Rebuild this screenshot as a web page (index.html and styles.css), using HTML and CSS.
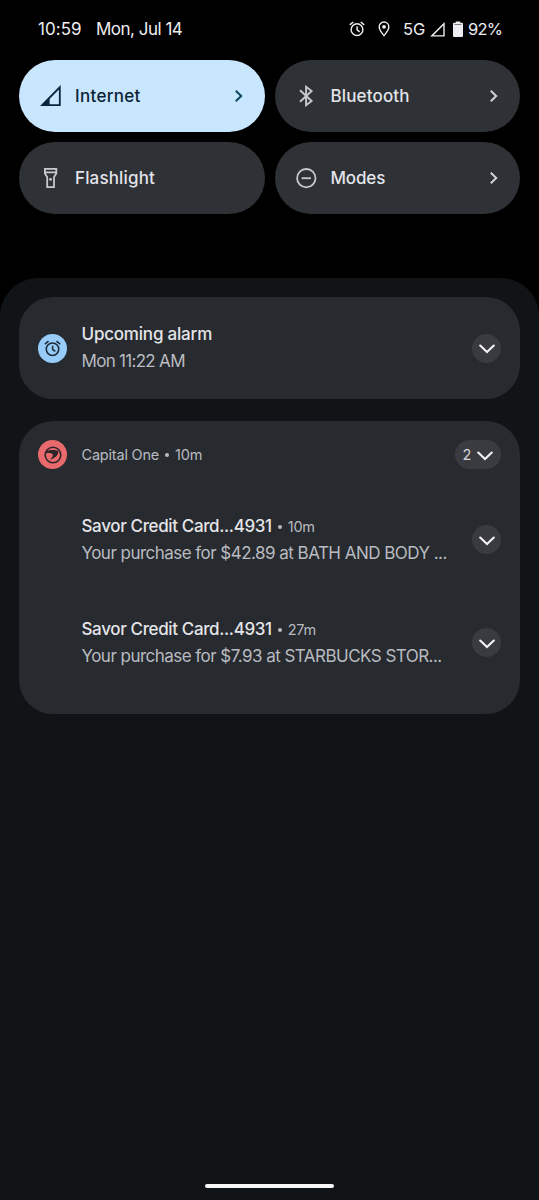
FILE: index.html
```html
<!DOCTYPE html>
<html lang="en">
<head>
<meta charset="utf-8">
<title>Notification shade</title>
<link rel="stylesheet" href="styles.css">
</head>
<body>
<svg width="0" height="0" class="defs">
  <symbol id="alarm" viewBox="0 0 24 24"><g fill="none" stroke="currentColor" stroke-width="2.2"><circle cx="12" cy="13" r="8.8"/><path d="M12.2 8V13.4L16 16.2M1.2 5.8L6.4 1.5M22.8 5.8L17.6 1.5"/></g></symbol>
  <symbol id="right" viewBox="0 0 10 14"><path d="M1.8 1.8L7.2 7L1.8 12.2" fill="none" stroke="currentColor" stroke-width="2"/></symbol>
  <symbol id="down" viewBox="0 0 16 10"><path d="M1.2 1.5L8 8.1L14.8 1.5" fill="none" stroke="currentColor" stroke-width="2.1" stroke-linecap="round"/></symbol>
</svg>
<div class="screen">
  <header class="status">
    <span class="clock">10:59</span><span class="date">Mon, Jul 14</span>
    <svg class="st-alarm"><use href="#alarm"/></svg>
    <svg class="st-pin" viewBox="0 0 12 16"><path d="M6 1C3.2 1 1.2 3.1 1.2 5.8C1.2 9.2 6 14.6 6 14.6S10.8 9.2 10.8 5.8C10.8 3.1 8.8 1 6 1Z" fill="none" stroke="currentColor" stroke-width="1.4"/><circle cx="6" cy="5.8" r="1.9" fill="currentColor"/></svg>
    <span class="net">5G</span>
    <svg class="st-signal" viewBox="0 0 15 15"><path d="M1.8 13.9H14V1.7Z" fill="none" stroke="currentColor" stroke-width="1.4"/></svg>
    <svg class="st-battery" viewBox="0 0 10 16"><path d="M2.8 0.4H7.2V1.8H9Q10 1.8 10 2.8V15Q10 16 9 16H1Q0 16 0 15V2.8Q0 1.8 1 1.8H2.8Z" fill="currentColor"/><path d="M1.5 3.5H8.5" stroke="#4b4b50" stroke-width=".7"/></svg>
    <span class="percent">92%</span>
  </header>

  <section class="tiles">
    <div class="tile active">
      <svg class="icon" viewBox="0 0 22 22"><path d="M2.2 20.1H19.8V2.3Z" fill="none" stroke="currentColor" stroke-width="1.8"/><path d="M1 21L9.6 12.3V21Z" fill="currentColor"/></svg>
      <span class="label internet">Internet</span><svg class="chev"><use href="#right"/></svg>
    </div>
    <div class="tile">
      <svg class="icon" viewBox="0 0 22 22"><path d="M4 5.2L15.6 16L10.1 20.2V1.8L15.6 6L4 16.8" fill="none" stroke="currentColor" stroke-width="1.9"/></svg>
      <span class="label bluetooth">Bluetooth</span><svg class="chev"><use href="#right"/></svg>
    </div>
    <div class="tile">
      <svg class="icon" viewBox="0 0 22 22"><path d="M4.9 1.8H16.3V6.6L14 10.1V20.2H7.2V10.1L4.9 6.6ZM4.9 5.4H16.3" fill="none" stroke="currentColor" stroke-width="1.8"/><circle cx="10.6" cy="12.4" r="1.4" fill="currentColor"/></svg>
      <span class="label flashlight">Flashlight</span>
    </div>
    <div class="tile">
      <svg class="icon" viewBox="0 0 22 22"><g fill="none" stroke="currentColor" stroke-width="1.8"><circle cx="10.3" cy="11.2" r="9.2"/><path d="M5.6 11.2H15"/></g></svg>
      <span class="label modes">Modes</span><svg class="chev"><use href="#right"/></svg>
    </div>
  </section>

  <main class="panel">
    <article class="card alarm-card">
      <div class="badge blue"><svg><use href="#alarm"/></svg></div>
      <div class="copy">
        <div class="line title upcoming">Upcoming alarm</div>
        <div class="line body when">Mon 11:22 AM</div>
      </div>
      <div class="expand"><svg><use href="#down"/></svg></div>
    </article>

    <article class="card group">
      <div class="group-head">
        <div class="badge red"><svg viewBox="0 0 18 18"><circle cx="9" cy="9" r="7.8" fill="none" stroke="currentColor" stroke-width="1.6"/><path d="M2 5.2C6 3.6 11.5 3.5 14.4 5.2C14.8 8.6 11.2 12 6 13.8C8 11.4 9.2 9.6 8.8 8.4C7.8 7 4.6 6.9 1.5 7.2Z" fill="currentColor"/></svg></div>
        <div class="app">Capital One<i class="dot"></i>10m</div>
        <div class="expand count">2<svg><use href="#down"/></svg></div>
      </div>
      <div class="item">
        <div class="copy">
          <div class="line title"><span class="savor">Savor Credit Card...4931</span><i class="dot"></i><span class="age">10m</span></div>
          <div class="line body bath">Your purchase for $42.89 at BATH AND BODY ...</div>
        </div>
        <div class="expand"><svg><use href="#down"/></svg></div>
      </div>
      <div class="item">
        <div class="copy">
          <div class="line title"><span class="savor">Savor Credit Card...4931</span><i class="dot"></i><span class="age">27m</span></div>
          <div class="line body star">Your purchase for $7.93 at STARBUCKS STOR...</div>
        </div>
        <div class="expand"><svg><use href="#down"/></svg></div>
      </div>
    </article>
    <div class="home"></div>
  </main>
</div>
</body>
</html>
```
FILE: styles.css
```css
* { box-sizing: border-box; }
body { margin: 0; background: #000; font-family: Inter, Roboto, sans-serif; color: #e3e4ea; }
.defs { display: block; position: absolute; }
svg { display: block; flex: none; }
.screen { width: 539px; height: 1200px; display: flex; flex-direction: column; overflow: hidden; }
.status { height: 60px; padding: 0 38px 2px 38px; display: flex; align-items: center; font-size: 17px; white-space: nowrap; color: #eeeef2; }
.clock { width: 58px; letter-spacing: .05px; }
.date { letter-spacing: -.5px; margin-right: auto; }
.st-alarm { width: 16px; height: 16px; margin-right: 13px; }
.st-pin { width: 12px; height: 16px; margin-right: 13px; }
.net { width: 27px; font-size: 16.5px; }
.st-signal { width: 15px; height: 15px; margin-right: 8px; }
.st-battery { width: 10px; height: 16px; margin-right: 5px; }
.percent { width: 33px; font-size: 16.5px; letter-spacing: -.8px; }

.tiles { display: grid; grid-template-columns: 246px 245.5px; grid-auto-rows: 72px; gap: 10px 9.5px; padding: .3px 19px 0; height: 218px; }
.tile { display: flex; align-items: center; border-radius: 36px; background: #2e3135; padding: 0 21px; }
.tile.active { background: #c9e6ff; color: #0b2436; }
.icon { width: 22px; height: 22px; margin-right: 13px; color: #c7c8d0; }
.active .icon { color: #06263a; }
.label { font-size: 17px; font-weight: 450; flex: 1; }
.internet { letter-spacing: .3px; }
.bluetooth { letter-spacing: .15px; }
.flashlight { letter-spacing: .15px; }
.modes { letter-spacing: -.15px; }
.chev { width: 10px; height: 14px; color: #d2d3d9; }
.active .chev { color: #0d4560; }

.panel { flex: 1; background: #111417; border-radius: 38px 38px 0 0; padding: 19px 19px 12px; display: flex; flex-direction: column; }
.card { background: #272a2e; border-radius: 34px; padding: 0 19px; }
.alarm-card { height: 102px; display: flex; align-items: center; }
.badge { width: 29px; height: 29px; border-radius: 50%; display: grid; place-items: center; color: #1d2b38; margin-right: 14.5px; flex: none; }
.badge svg { width: 17px; height: 17px; }
.badge.red svg { width: 18px; height: 18px; }
.blue { background: #97ccf9; }
.red { background: #e96a6d; color: #2d2529; }
.copy { flex: 1; min-width: 0; }
.line { height: 27px; line-height: 27px; white-space: nowrap; font-size: 17px; }
.title { font-weight: 500; display: flex; align-items: center; color: #e4e5e9; }
.upcoming { letter-spacing: -.2px; }
.savor { letter-spacing: -.36px; }
.body { color: #b9bbc1; }
.when { letter-spacing: -.7px; }
.bath { letter-spacing: -.53px; }
.star { letter-spacing: -.53px; }
.expand { width: 29px; height: 29px; border-radius: 15px; background: #393b40; display: flex; align-items: center; justify-content: center; flex: none; color: #f0f0f5; }
.expand svg { width: 16px; height: 10px; margin-top: 2px; }
.count { width: 46px; gap: 6px; font-size: 14.5px; color: #d5d6dc; }
.count svg { color: #f0f0f5; }
.dot { width: 4px; height: 4px; border-radius: 50%; background: #b9bbc1; margin: 1px 6px 0; flex: none; }
.group { height: 293px; margin-top: 22px; }
.group-head { display: flex; align-items: center; padding-top: 19px; height: 48px; }
.app { display: flex; align-items: center; flex: 1; font-size: 14.5px; letter-spacing: -.2px; color: #b9bbc1; }
.item { display: flex; align-items: center; height: 54px; margin-top: 43.5px; padding-left: 43.5px; }
.item + .item { margin-top: 49px; }
.age { font-weight: 400; font-size: 14.5px; letter-spacing: -.3px; color: #b9bbc1; }
.home { width: 129px; height: 4px; border-radius: 2px; background: #f8f8f8; margin: auto auto 0; }
```
